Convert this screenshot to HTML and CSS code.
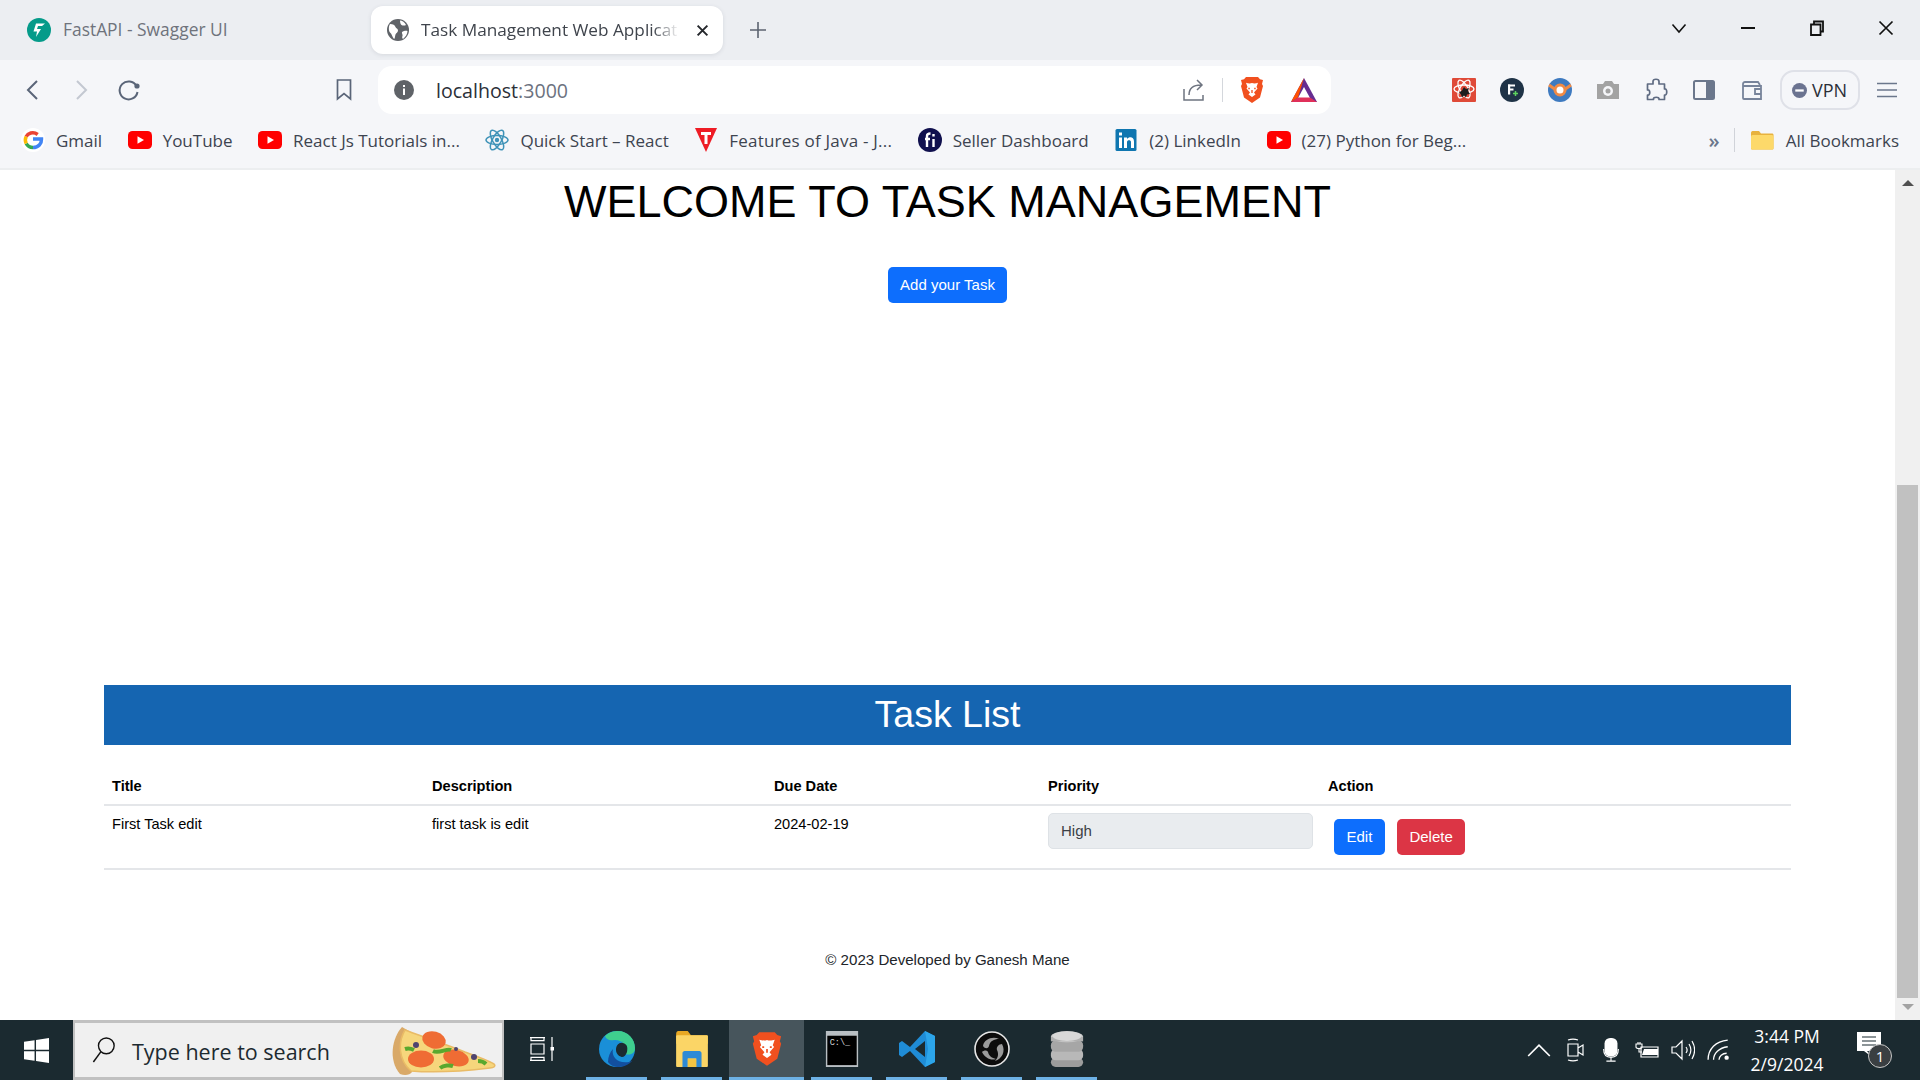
FILE: index.html
```html
<!DOCTYPE html>
<html lang="en">
<head>
<meta charset="utf-8">
<title>Task Management Web Application</title>
<link rel="stylesheet" href="styles.css">
</head>
<body>
<svg class="defs" width="0" height="0">
  <defs>
    <symbol id="yt" viewBox="0 0 24 24"><rect x="0" y="3" width="24" height="18" rx="4.5" fill="#f00"/><path d="M9.5 8.2v7.6l6.5-3.8z" fill="#fff"/></symbol>
    <symbol id="atom" viewBox="0 0 24 24"><g fill="none" stroke="#3f93b8" stroke-width="1.5"><ellipse cx="12" cy="12" rx="11" ry="4.4"/><ellipse cx="12" cy="12" rx="11" ry="4.4" transform="rotate(60 12 12)"/><ellipse cx="12" cy="12" rx="11" ry="4.4" transform="rotate(120 12 12)"/></g><circle cx="12" cy="12" r="2.2" fill="#3f93b8"/></symbol>
    <symbol id="brave" viewBox="0 0 24 28"><path d="M6 1h12l2 2.2 3 .8-1 4 1 2-3 11.5L12 27 4 21.500 1 10l1-2-1-4 3-.8z" fill="#f1501f"/><path d="M12 7c-2 .8-4.500.2-6-.2L7.500 11l-1 1.500 3.500 4-1.500 2L12 21l3.500-2.500-1.500-2 3.500-4-1-1.500 1.500-4.200c-1.500.4-4 1-6 .2z" fill="#fff"/><path d="M9.800 12.500h-1.500M15.700 12.500h-1.500M12 14v3" stroke="#f1501f" stroke-width="1.300"/></symbol>
  </defs>
</svg>

<div class="browser">
  <header class="tabstrip">
    <div class="tab">
      <svg class="fav24" viewBox="0 0 24 24"><circle cx="12" cy="12" r="12" fill="#059b8a"/><path d="M9 5.500h9l-3 2.500h-4l-1 3h4l-5 8 1-5.500H6.500z" fill="#fff"/></svg>
      <span class="tab-title">FastAPI - Swagger UI</span>
    </div>
    <div class="tab tab-active">
      <svg class="fav22" viewBox="0 0 22 22"><circle cx="11" cy="11" r="11" fill="#5f6368"/><path d="M3 5c3 0 5 1 5.500 3 .5 1.500 2.500 1.500 2.500 3.500S9 14 8.500 15.500 8 20 7 20C5 18 5 15 3 13.500 1.500 12 1.500 7 3 5zM13 1.500c2 0 5 2 6 4.500-1.500 1-3.500.500-4.500 0S13 3 13 1.500zM15 13c1.500-1 4-1.500 5.500-1 0 3-2 6-4.500 8-1-1-1-2-.5-3s-1-3-.5-4z" fill="#fff"/></svg>
      <span class="tab-title tab-title-active">Task Management Web Applicat</span>
      <svg class="tab-x" viewBox="0 0 12 12"><path d="M1.500 1.500l9 9M10.500 1.500l-9 9" stroke="#24272b" stroke-width="1.800"/></svg>
    </div>
    <svg class="plus" viewBox="0 0 16 16"><path d="M8 0v16M0 8h16" stroke="#5c6370" stroke-width="1.600"/></svg>
    <div class="win-controls">
      <svg class="win-ic" viewBox="0 0 16 16"><path d="M1.500 4.500 8 12l6.500-7.500" fill="none" stroke="#111" stroke-width="1.600"/></svg>
      <svg class="win-ic" viewBox="0 0 16 16"><path d="M1 8h14" stroke="#111" stroke-width="2"/></svg>
      <svg class="win-ic" viewBox="0 0 16 16"><path d="M2 4.500h9.500V15H2zM5 4.500V1.500h9v10h-2.500" fill="none" stroke="#111" stroke-width="1.800"/></svg>
      <svg class="win-ic" viewBox="0 0 16 16"><path d="M1.500 1.500l13 13M14.500 1.500l-13 13" stroke="#111" stroke-width="1.700"/></svg>
    </div>
  </header>

  <nav class="toolbar">
    <div class="nav-left">
      <svg class="tb-ic" viewBox="0 0 24 24"><path d="M16 3 7 12l9 9" fill="none" stroke="#5a6578" stroke-width="2"/></svg>
      <svg class="tb-ic" viewBox="0 0 24 24"><path d="M8 3l9 9-9 9" fill="none" stroke="#c3c8d1" stroke-width="2"/></svg>
      <svg class="tb-ic" viewBox="0 0 24 24"><path d="M19.500 8A9 9 0 1 0 20.500 14" fill="none" stroke="#5a6578" stroke-width="2"/><circle cx="20" cy="8" r="2.600" fill="#5a6578"/></svg>
    </div>
    <svg class="tb-bookmark" viewBox="0 0 16 22"><path d="M1.500 1h13v19L8 14.500 1.500 20z" fill="none" stroke="#5a6578" stroke-width="1.700"/></svg>
    <div class="urlbar">
      <svg class="info" viewBox="0 0 20 20"><circle cx="10" cy="10" r="10" fill="#5f6368"/><path d="M9 8.500h2V15H9zM9 5h2v2H9z" fill="#fff"/></svg>
      <span class="url">localhost<span class="url-port">:3000</span></span>
      <svg class="share" viewBox="0 0 24 24"><path d="M2 11v11h19v-5M7 17c0-7 5-10 12-10M15 2l5 5-5 5" fill="none" stroke="#6e7480" stroke-width="1.500"/></svg>
      <span class="url-divider"></span>
      <svg class="brave-url"><use href="#brave"/></svg>
      <svg class="bat" viewBox="0 0 28 26"><path d="M14 1 1 25h26z" fill="#662d91"/><path d="M14 1 1 25l7-4.500z" fill="#ff5000"/><path d="M14 10 8 21h12z" fill="#fff"/><path d="M1 25l7-4.500h12l7 4.500z" fill="#e0305a"/></svg>
    </div>
    <div class="extensions">
      <svg class="ext" viewBox="0 0 24 24"><rect width="24" height="24" rx="1" fill="#df4a38"/><g fill="none" stroke="#fff" stroke-width="1.300"><ellipse cx="12" cy="11" rx="10" ry="4"/><ellipse cx="12" cy="11" rx="10" ry="4" transform="rotate(60 12 11)"/><ellipse cx="12" cy="11" rx="10" ry="4" transform="rotate(120 12 11)"/></g><path d="M12 9l2 2 3-1-1 3 2 3-3 .5-1 3-2-2-2 2-1-3-2-2 3-2z" fill="#1d1d1d"/></svg>
      <svg class="ext" viewBox="0 0 24 24"><circle cx="12" cy="12" r="12" fill="#1f3347"/><rect x="8" y="6.500" width="7" height="2" fill="#fff"/><rect x="8" y="6.500" width="2.200" height="10" fill="#fff"/><rect x="8" y="10.500" width="5.500" height="2" fill="#fff"/><path d="M13 15.500h5M15.500 13v5" stroke="#5ed35e" stroke-width="1.500"/></svg>
      <svg class="ext" viewBox="0 0 24 24"><circle cx="12" cy="12" r="12" fill="#3e7ac0"/><path d="M1 7l7 5M23 7l-7 5" stroke="#f08a46" stroke-width="3"/><circle cx="12" cy="12" r="5" fill="#fff" stroke="#f08a46" stroke-width="3"/></svg>
      <svg class="ext" viewBox="0 0 24 24"><path d="M1 6h6l2-3h7l2 3h5v15H1z" fill="#a3a3a3"/><circle cx="12" cy="13" r="5" fill="#f5f6f9"/><circle cx="12" cy="13" r="2.500" fill="#a3a3a3"/></svg>
      <svg class="ext" viewBox="0 0 24 24"><path d="M9 3.500c0-3 6-3 6 0V6h5.500v5c3-1 3 7 0 6v4.500H15c1-3-6.500-3-5.500 0H3.500V17c3 1 3-6 0-5V6H9z" fill="none" stroke="#5f6b82" stroke-width="1.700" stroke-linejoin="round"/></svg>
      <svg class="ext" viewBox="0 0 24 24"><rect x="2" y="3" width="20" height="18" rx="1.500" fill="none" stroke="#6b778c" stroke-width="2"/><rect x="14" y="3" width="8" height="18" fill="#6b778c"/></svg>
      <svg class="ext" viewBox="0 0 24 24"><path d="M3 8V6c0-1.500 1-2 2-2h13l2 3M3 8h18v13H4c-.5 0-1-.5-1-1z" fill="none" stroke="#77839a" stroke-width="1.800"/><path d="M21 11h-6v5h6" fill="none" stroke="#77839a" stroke-width="1.800"/></svg>
      <div class="vpn">
        <svg class="vpn-ic" viewBox="0 0 16 16"><circle cx="8" cy="8" r="8" fill="#6b7390"/><rect x="3.500" y="6.800" width="9" height="2.400" fill="#fff"/></svg>
        <span>VPN</span>
      </div>
      <svg class="menu" viewBox="0 0 20 16"><path d="M0 1.500h20M0 8h20M0 14.500h20" stroke="#6b778c" stroke-width="1.700"/></svg>
    </div>
  </nav>

  <nav class="bookmarks">
    <div class="bm bm-gmail">
      <svg class="bm-ic" viewBox="0 0 24 24"><circle cx="12" cy="12" r="12" fill="#fff"/><path d="M12 11h8.500c.2 4.500-3 8.500-8.500 8.500" fill="none" stroke="#4285f4" stroke-width="3.500"/><path d="M12 19.500c-3 0-5.500-1.500-6.800-4" fill="none" stroke="#34a853" stroke-width="3.500"/><path d="M5.200 15.500c-1-2-1-5 0-7" fill="none" stroke="#fbbc05" stroke-width="3.500"/><path d="M5.200 8.500c1.500-3 6.800-5.500 11.500-2" fill="none" stroke="#ea4335" stroke-width="3.500"/></svg>
      <span>Gmail</span>
    </div>
    <div class="bm"><svg class="bm-ic"><use href="#yt"/></svg><span>YouTube</span></div>
    <div class="bm"><svg class="bm-ic"><use href="#yt"/></svg><span>React Js Tutorials in...</span></div>
    <div class="bm"><svg class="bm-ic"><use href="#atom"/></svg><span>Quick Start – React</span></div>
    <div class="bm bm-wide">
      <svg class="bm-ic" viewBox="0 0 24 24"><path d="M1 0h22L12 24z" fill="#ee1c25"/><path d="M7 4h10v3h-3.500v9h-3V7H7z" fill="#fff"/></svg>
      <span>Features of Java - J...</span>
    </div>
    <div class="bm">
      <svg class="bm-ic" viewBox="0 0 24 24"><circle cx="12" cy="12" r="12" fill="#10104e"/><path d="M7 11h5M9 19v-11c0-2 1.500-2.500 3.500-2.500M15.500 11v8M15.500 6v2.500" fill="none" stroke="#fff" stroke-width="2.400"/></svg>
      <span>Seller Dashboard</span>
    </div>
    <div class="bm">
      <svg class="bm-ic" viewBox="0 0 24 24"><rect x="1.500" y="1" width="21" height="22" rx="1.500" fill="#0f76b0"/><path d="M5 9.500h3V20H5zM5 4.500h3v3H5zM10 9.500h3v1.500c2-2.500 7-2.500 7 2.500V20h-3v-6c0-2.500-4-2.500-4 0v6h-3z" fill="#fff"/></svg>
      <span>(2) LinkedIn</span>
    </div>
    <div class="bm"><svg class="bm-ic"><use href="#yt"/></svg><span>(27) Python for Beg...</span></div>
    <div class="bm-right">
      <span class="bm-more">»</span>
      <span class="bm-divider"></span>
      <div class="bm bm-all">
        <svg class="bm-ic" viewBox="0 0 24 20"><path d="M1 3c0-1 .5-2 1.500-2H9l2 2.500H22c1 0 1.500.5 1.500 1.500v13c0 1-.5 1.500-1.500 1.500H2.500C1.500 19.500 1 19 1 18z" fill="#e8b23e"/><rect x="1" y="5" width="22.500" height="14.500" rx="1.500" fill="#fdd96a"/></svg>
        <span>All Bookmarks</span>
      </div>
    </div>
  </nav>
</div>

<div class="viewport">
  <main class="page">
    <h1 class="welcome">WELCOME TO TASK MANAGEMENT</h1>
    <button class="btn btn-primary btn-add" type="button">Add your Task</button>
    <h2 class="list-title">Task List</h2>
    <table class="tasks">
      <colgroup>
        <col class="c-title"><col class="c-desc"><col class="c-due"><col class="c-prio"><col class="c-action">
      </colgroup>
      <thead>
        <tr><th>Title</th><th>Description</th><th>Due Date</th><th>Priority</th><th>Action</th></tr>
      </thead>
      <tbody>
        <tr>
          <td>First Task edit</td>
          <td>first task is edit</td>
          <td>2024-02-19</td>
          <td class="td-prio"><div class="priority">High</div></td>
          <td class="td-action">
            <button class="btn btn-primary" type="button">Edit</button>
            <button class="btn btn-danger" type="button">Delete</button>
          </td>
        </tr>
      </tbody>
    </table>
    <footer class="foot">© 2023 Developed by Ganesh Mane</footer>
  </main>
  <aside class="scrollbar">
    <span class="sb-up"></span>
    <span class="sb-thumb"></span>
    <span class="sb-down"></span>
  </aside>
</div>

<footer class="taskbar">
  <div class="start">
    <svg class="start-ic" viewBox="0 0 26 26"><path d="M0 4l11-1.600V12.300H0zM12.500 2.200 26 0v12.300H12.500zM0 13.700h11v10L0 22zM12.500 13.700H26V26l-13.500-2.100z" fill="#fff"/></svg>
  </div>
  <div class="search">
    <svg class="search-ic" viewBox="0 0 26 30"><circle cx="15.500" cy="10.500" r="8.500" fill="none" stroke="#111" stroke-width="1.500"/><path d="M9.500 17 1.500 28" stroke="#111" stroke-width="1.600"/></svg>
    <span class="search-text">Type here to search</span>
    <svg class="pizza" viewBox="0 0 108 52">
      <path d="M14 3C4 14 0 36 12 50c5 2 10 1 12-2L26 10z" fill="#d9a968"/>
      <path d="M17 6c10 4 40 14 60 22 14 5 24 9 29 12 2 2 0 4-4 4-25 3-55 5-79 3C10 36 10 18 17 6z" fill="#f6d67c" stroke="#e9bb66" stroke-width="1.500"/>
      <ellipse cx="46" cy="16" rx="12" ry="8.500" fill="#ef6c34" transform="rotate(15 46 16)"/>
      <ellipse cx="33" cy="35" rx="13" ry="8.500" fill="#ef6c34"/>
      <ellipse cx="68" cy="34" rx="13" ry="8" fill="#ef6c34" transform="rotate(15 68 34)"/>
      <path d="M45 27c6 3 14-3 18-1M52 44c4-3 10-3 13-2M90 37c3 0 6 1 8 3M17 25c3-1 7 0 9 1" fill="none" stroke="#59a82e" stroke-width="4"/>
      <circle cx="28" cy="21" r="3" fill="#4f4470"/><circle cx="86" cy="33" r="3" fill="#4f4470"/><circle cx="68" cy="25" r="2" fill="#4f4470"/>
    </svg>
  </div>
  <div class="apps">
    <div class="app">
      <svg class="app-taskview" viewBox="0 0 24 24"><path d="M0 .7h15M1 .7v3h13v-3M0 23.300h15M1 23.300v-3h13v3M1 7h13v10H1zM22 0v24" fill="none" stroke="#fff" stroke-width="1.200"/><rect x="20.500" y="10" width="3.500" height="3.500" fill="#fff"/></svg>
    </div>
    <div class="app app-open">
      <svg class="app-ic" viewBox="0 0 36 36"><circle cx="18" cy="18" r="18" fill="#1a8fd8"/><path d="M6 5c4-4 9-5 13-5 10 0 17 8 17 17 0 3-1 4-2 5-3 2-7 2-9 0 3-8-3-14-10-13C10 10 7 8 6 5z" fill="#3fcf8e"/><path d="M14 18c-2 8 5 15 16 13 3-1 4-2 5-4-3 6-10 9-15 9-5 0-9-2-11-5 0-5 2-10 5-13z" fill="#124f9e"/><path d="M15 19c1-5 5-8 9-7 4 1 5 4 4 9-1 3-3 5-5 5-5 0-9-3-8-7z" fill="#1b2a30"/><path d="M14 20c0-6 5-10 11-9-6 0-8 4-8 8 0 5 5 8 11 8-7 3-14-1-14-7z" fill="#1a8fd8"/></svg>
    </div>
    <div class="app app-open">
      <svg class="app-ic app-folder" viewBox="0 0 30 34"><path d="M0 3c0-2 1-3 2-3h9l3 4h15c1 0 1 1 1 2v6H0z" fill="#e8a824"/><rect y="4" width="30" height="30" rx="1" fill="#fbd566"/><path d="M6 34V21c0-1 1-2 2-2h14c1 0 2 1 2 2v13h-5v-8h-8v8z" fill="#2d8ad6"/><rect x="11" y="26" width="8" height="8" fill="#f4c542"/></svg>
    </div>
    <div class="app app-open app-active"><svg class="app-ic"><use href="#brave"/></svg></div>
    <div class="app app-open">
      <svg class="app-ic" viewBox="0 0 34 38"><rect width="34" height="38" fill="#b9bfc3"/><rect x="1.500" y="5" width="31" height="31" fill="#000"/><text class="cmd-text" x="4" y="15">C:\_</text></svg>
    </div>
    <div class="app app-open">
      <svg class="app-ic" viewBox="0 0 36 36"><path d="M26 0 11 16 3 10 0 12v12l3 2 8-6 15 16 10-5V5zm0 10v16l-10-8z" fill="#1f8cd6"/><path d="M26 0l10 5v26l-10 5 3-18z" fill="#2ca5ea"/></svg>
    </div>
    <div class="app app-open">
      <svg class="app-ic" viewBox="0 0 36 36"><circle cx="18" cy="18" r="17" fill="#0c0c0c" stroke="#e6e6e6" stroke-width="1.600"/><path d="M9 15C10 8 19 5 25 8c-5 0-9 2-10 7-1 3-4 3-6 0zM28 13c4 7 0 15-7 17 3-3 4-7 2-11-1-3 2-6 5-6zM8 21c3 6 9 9 14 7-4-1-7-3-8-7-1-2-4-2-6 0z" fill="#9a9a9a"/></svg>
    </div>
    <div class="app app-open">
      <svg class="app-ic" viewBox="0 0 34 38"><rect y="28" width="34" height="10" rx="5" fill="#9c9c9c"/><rect y="19" width="34" height="12" rx="5" fill="#b8b8b8"/><rect y="10" width="34" height="12" rx="5" fill="#a6a6a6"/><ellipse cx="17" cy="6" rx="17" ry="6" fill="#d0d0d0"/><rect y="6" width="34" height="5" fill="#b0b0b0"/><ellipse cx="17" cy="5.500" rx="15" ry="5" fill="#d8d8d8"/></svg>
    </div>
  </div>
  <div class="tray">
    <svg class="tray-ic" viewBox="0 0 20 12"><path d="M1 11 10 2l9 9" fill="none" stroke="#fff" stroke-width="1.400"/></svg>
    <svg class="tray-ic" viewBox="0 0 20 24"><path d="M3 6h10v12H3zM13 10l5-3v10l-5-3M3 2c3-1 7-1 10 0M3 22c3 1 7 1 10 0" fill="none" stroke="#fff" stroke-width="1.200"/></svg>
    <svg class="tray-ic" viewBox="0 0 20 26"><rect x="3" y="0" width="14" height="20" rx="6" fill="#fff"/><path d="M2 12c0 6 3 9 8 9s8-3 8-9M10 21v4M5 25h10" fill="none" stroke="#fff" stroke-width="1.200"/></svg>
    <svg class="tray-ic" viewBox="0 0 24 16"><path d="M6 5h17v10H6z" fill="none" stroke="#fff" stroke-width="1.200"/><path d="M9 7h14v6H7z" fill="#fff"/><path d="M1 2h6v3c0 2-6 2-6 0zM3 0v2M5 0v2M4 7v3h3" fill="none" stroke="#fff" stroke-width="1.100"/></svg>
    <svg class="tray-ic" viewBox="0 0 24 22"><path d="M1 8h4l6-6v18l-6-6H1zM15 8c1.500 2 1.500 4 0 6M18 5c2.500 4 2.500 8 0 12M21 2c3.500 6 3.500 12 0 18" fill="none" stroke="#fff" stroke-width="1.200"/></svg>
    <svg class="tray-ic" viewBox="0 0 22 20"><path d="M1 19C1 9 8 2 19 1M6 19c0-6 5-11 13-12M11 19c0-3 3-6 7-6" fill="none" stroke="#fff" stroke-width="1.200"/><circle cx="18" cy="17" r="2" fill="#fff"/></svg>
    <div class="clock"><span>3:44 PM</span><span>2/9/2024</span></div>
    <div class="notify">
      <svg class="notify-ic" viewBox="0 0 24 26"><path d="M0 0h24v19H10l5 6-8-6H0z" fill="#fff"/><path d="M5 5h14M5 9h14M5 13h14" stroke="#1b2a30" stroke-width="1.200"/></svg>
      <span class="badge">1</span>
    </div>
  </div>
</footer>
</body>
</html>
```
FILE: styles.css
```css
* { box-sizing: border-box; }

html, body { margin: 0; height: 100%; }

body {
  width: 1920px;
  height: 1080px;
  overflow: hidden;
  display: flex;
  flex-direction: column;
  background: #fff;
  font-family: "Liberation Sans", Arial, sans-serif;
}

.defs { display: block; height: 0; }

svg { display: block; flex: none; }

/* Browser chrome */
.browser {
  flex: none;
  height: 170px;
  display: flex;
  flex-direction: column;
  font-family: "Open Sans", "Noto Sans", sans-serif;
  background: #f5f6f9;
  border-bottom: 2px solid #eceef0;
}

.tabstrip {
  flex: none;
  height: 60px;
  display: flex;
  align-items: flex-start;
  background: #eceef2;
  padding: 6px 0 0 27px;
}

.tab {
  width: 344px;
  height: 48px;
  display: flex;
  align-items: center;
  gap: 12px;
  font-size: 17.4px;
  color: #6f737c;
  white-space: nowrap;
}

.tab-active {
  width: 352px;
  background: #fff;
  border-radius: 12px;
  padding: 0 14px 0 16px;
  gap: 12px;
  box-shadow: 0 1px 4px rgba(60, 64, 80, .12);
}

.tab-title { display: block; padding-bottom: 2px; }

.tab-title-active {
  flex: 1;
  font-size: 17.2px;
  color: #3f444c;
  -webkit-mask-image: linear-gradient(to right, #000 90%, transparent);
  mask-image: linear-gradient(to right, #000 90%, transparent);
}

.fav24 { width: 24px; height: 24px; }
.fav22 { width: 22px; height: 22px; }
.tab-x { width: 13px; height: 13px; margin-left: 5px; }

.plus { width: 16px; height: 16px; margin: 16px 0 0 27px; }

.win-controls {
  margin-left: auto;
  display: flex;
  gap: 53px;
  padding: 14px 26px 0 0;
}

.win-ic { width: 16px; height: 16px; }

.toolbar {
  flex: none;
  height: 60px;
  padding-top: 6px;
  display: flex;
  align-items: flex-start;
  padding-left: 21px;
}

.nav-left {
  display: flex;
  gap: 24px;
  height: 48px;
  align-items: center;
}

.tb-ic { width: 24px; height: 24px; }

.tb-bookmark {
  width: 16px;
  height: 22px;
  margin: 13px 26px 0 195px;
}

.urlbar {
  width: 953px;
  height: 48px;
  background: #fff;
  border-radius: 14px;
  display: flex;
  align-items: center;
  padding: 0 13px 0 16px;
}

.info { width: 20px; height: 20px; }

.url {
  margin-left: 22px;
  font-size: 19.6px;
  color: #2c3038;
}

.url-port { color: #6c7280; }

.share { width: 24px; height: 24px; margin-left: auto; }

.url-divider {
  width: 1px;
  height: 24px;
  background: #d4d7dc;
  margin: 0 17px 0 16px;
}

.brave-url { width: 24px; height: 28px; }

.bat { width: 28px; height: 26px; margin-left: 26px; }

.extensions {
  display: flex;
  align-items: center;
  height: 48px;
  margin-left: 121px;
  gap: 24px;
}

.ext { width: 24px; height: 24px; }

.vpn {
  width: 80px;
  height: 40px;
  margin-left: -8px;
  border: 2px solid #dfe1e8;
  border-radius: 14px;
  display: flex;
  align-items: center;
  gap: 5px;
  padding-left: 10px;
  font-size: 18px;
  color: #2b2f38;
}

.vpn-ic { width: 15px; height: 15px; }

.menu { width: 20px; height: 16px; margin-left: -7px; }

.bookmarks {
  flex: none;
  height: 48px;
  padding: 0 21px 8px 21px;
  display: flex;
  align-items: center;
  gap: 25.5px;
  font-size: 17px;
  color: #3d4450;
  white-space: nowrap;
}

.bm {
  display: flex;
  align-items: center;
  gap: 11px;
}

.bm-wide span { letter-spacing: .22px; }

.bm-ic { width: 24px; height: 24px; }

.bm-right {
  margin-left: auto;
  display: flex;
  align-items: center;
}

.bm-all { gap: 12px; }

.bm-more {
  font-size: 20px;
  color: #6b778c;
  font-weight: 600;
}

.bm-divider {
  width: 1px;
  height: 24px;
  background: #d0d3d9;
  margin: 0 15px 0 14px;
}

/* Page */
.viewport {
  flex: 1;
  display: flex;
  min-height: 0;
}

.page {
  flex: 1;
  padding: 5px 104px 0;
  display: flex;
  flex-direction: column;
  align-items: center;
  color: #000;
}

.welcome {
  margin: 0;
  font-size: 45px;
  line-height: 54px;
  font-weight: 400;
}

.btn {
  border: 0;
  height: 36px;
  border-radius: 5px;
  font-family: inherit;
  font-size: 15px;
  color: #fff;
  padding: 0 12.5px 2px;
}

.btn-primary { background: #0d6efd; }
.btn-danger { background: #dc3545; margin-left: 8px; }

.btn-add {
  width: 119px;
  margin-top: 38px;
  padding: 0 0 2px;
}

.list-title {
  width: 100%;
  height: 60px;
  margin: 382px 0 0;
  background: #1565b1;
  color: #fff;
  text-align: center;
  font-size: 37.5px;
  line-height: 58px;
  font-weight: 400;
}

.tasks {
  width: 100%;
  margin-top: 23px;
  border-collapse: collapse;
  table-layout: fixed;
  font-size: 14.6px;
  line-height: 21px;
}

.c-title { width: 320px; }
.c-desc { width: 342px; }
.c-due { width: 274px; }
.c-prio { width: 280px; }

.tasks th {
  text-align: left;
  font-weight: 700;
  padding: 8px 8px 7px;
  border-bottom: 2px solid #e4e6e9;
  height: 37px;
}

.tasks td {
  vertical-align: top;
  padding: 8px;
  height: 63px;
  border-bottom: 2px solid #e4e6e9;
}

.tasks .td-prio { padding: 7px 8px; }
.tasks .td-action { padding: 13px 14px; white-space: nowrap; }

.priority {
  width: 265px;
  height: 36px;
  background: #e9ecef;
  border: 1px solid #dee2e6;
  border-radius: 5px;
  font-size: 15px;
  line-height: 34px;
  padding-left: 12px;
  color: #3b4046;
}

.foot {
  margin-top: 80px;
  font-size: 15.1px;
  line-height: 20px;
  color: #212529;
}

/* Scrollbar */
.scrollbar {
  flex: none;
  width: 25px;
  background: #f0f0f0;
  display: flex;
  flex-direction: column;
  align-items: center;
  padding-top: 10px;
}

.sb-up {
  width: 0;
  height: 0;
  border-left: 6px solid transparent;
  border-right: 6px solid transparent;
  border-bottom: 6px solid #505050;
}

.sb-thumb {
  width: 21px;
  height: 513px;
  background: #c1c1c1;
  margin-top: 299px;
}

.sb-down {
  width: 0;
  height: 0;
  margin-top: 6px;
  border-left: 6px solid transparent;
  border-right: 6px solid transparent;
  border-top: 6px solid #a3a3a3;
}

/* Taskbar */
.taskbar {
  flex: none;
  height: 60px;
  background: #1b2a30;
  display: flex;
  align-items: stretch;
  font-family: "Open Sans", "Noto Sans", sans-serif;
}

.start {
  width: 73px;
  display: flex;
  align-items: center;
  justify-content: center;
}

.start-ic { width: 25px; height: 25px; }

.search {
  width: 431px;
  background: #f0f0f0;
  border-top: 3px solid #c1c1c1;
  border-bottom: 3px solid #c1c1c1;
  border-left: 2px solid #c1c1c1;
  border-right: 2px solid #c1c1c1;
  display: flex;
  align-items: center;
  padding-left: 17px;
}

.search-ic { width: 24px; height: 28px; }

.search-text {
  margin-left: 16px;
  padding-top: 2px;
  font-size: 21.5px;
  color: #1d2a30;
}

.pizza { width: 108px; height: 52px; margin-left: auto; margin-right: 6px; }

.apps {
  display: flex;
  width: 600px;
}

.app {
  width: 75px;
  display: flex;
  align-items: center;
  justify-content: center;
  padding-bottom: 2px;
  position: relative;
}

.app-open::after {
  content: "";
  position: absolute;
  left: 7px;
  right: 7px;
  bottom: 0;
  height: 3px;
  background: #6db1e5;
}

.app-active { background: #47555c; }
.app-active::after { left: 0; right: 0; }

.app-ic { width: 36px; height: 36px; }
.app-folder { width: 32px; }
.app-taskview { width: 24px; height: 24px; }

.cmd-text {
  font-family: "Liberation Mono", monospace;
  font-size: 9px;
  fill: #d8d8d8;
}

.tray {
  flex: 1;
  display: flex;
  align-items: center;
  justify-content: flex-end;
  gap: 12px;
  color: #fff;
}

.tray-ic { width: 24px; height: 24px; }

.clock {
  width: 78px;
  margin: 0 8px 0 5px;
  display: flex;
  flex-direction: column;
  align-items: center;
  gap: 4px;
  font-size: 17.5px;
  line-height: 24px;
  white-space: nowrap;
}

.notify {
  width: 50px;
  height: 44px;
  position: relative;
  margin-right: 24px;
}

.notify-ic {
  position: absolute;
  left: 11px;
  top: 4px;
  width: 24px;
  height: 26px;
}

.badge {
  position: absolute;
  left: 22px;
  top: 16px;
  width: 24px;
  height: 24px;
  border-radius: 50%;
  background: #3a3f42;
  border: 1px solid #c8c8c8;
  font-size: 15px;
  line-height: 22px;
  text-align: center;
}
```
